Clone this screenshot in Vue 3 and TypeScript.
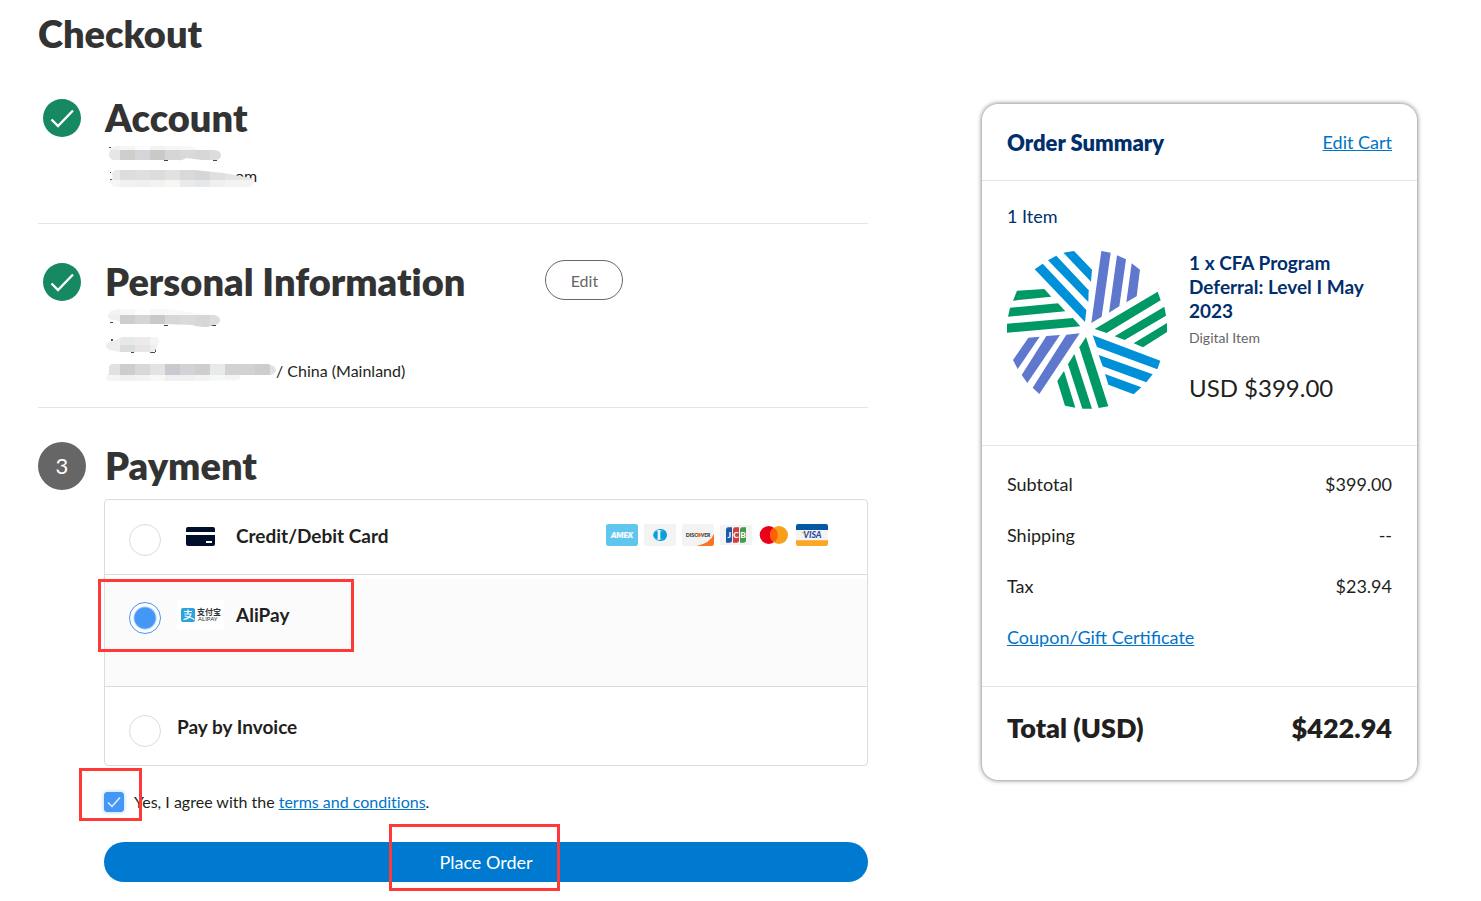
<script setup lang="ts">
import { ref } from 'vue'

interface MosaicRow {
  x: number
  y: number
  h: number
  colors: string[]
}

const CELL = 15

const accountRows: MosaicRow[] = [
  { x: 1, y: 2, h: 4, colors: ['#f1f1f1', '#f5f5f5', '#fcfcfc', '#f3f3f3', '#f5f6f6', '#f6f8f7', '#fafafa', '#fafafa'] },
  { x: 1, y: 6, h: 11, colors: ['#e6e6e6', '#d0cecd', '#d3d5d8', '#cbc9c8', '#d5d6d7', '#d9d9d7', '#d6d8d8', '#dcdcdc'] },
  { x: 1, y: 26, h: 10, colors: ['#eaeaea', '#dedddc', '#e0dfde', '#dddcdb', '#e2e1df', '#d8d9db', '#d4d6d8', '#dfdfdf', '#e4e4e2', '#e6e6e2'] },
  { x: 1, y: 36, h: 7, colors: ['#f6f6f6', '#f1f1f1', '#efefef', '#f2f2f2', '#f6f6f4', '#e9eaeb', '#e6e7e8', '#efefef', '#f3f3f3', '#f3f3f3'] },
]

const personalRows: MosaicRow[] = [
  { x: 1, y: 1, h: 6, colors: ['#f3f3f3', '#f8f8f8', '#fdfdfc', '#f7f7f7', '#f9f9f9', '#f8fafa', '#fafafa', '#fafafa'] },
  { x: 1, y: 7, h: 12, colors: ['#efefef', '#d0cecd', '#d3d5d8', '#cbc9c8', '#d7d7d7', '#dadad8', '#d6d8d8', '#dddddb'] },
  { x: 1, y: 29, h: 8, colors: ['#eeeeee', '#e6e8e8', '#eceaea', '#f3f4f4'] },
  { x: 1, y: 37, h: 9, colors: ['#ededed', '#dadcde', '#e8e6e5', '#eeeeee'] },
]

const addressRows: MosaicRow[] = [
  { x: 1, y: 6, h: 11, colors: ['#e2e1e0', '#cccdd0', '#d9d8d7', '#e4e3e1', '#c9cad0', '#d2d3d5', '#d0cecd', '#e8eaea', '#d2d2d2', '#d2d2d1', '#cfcdcc', '#e0e1e3'] },
  { x: 1, y: 17, h: 7, colors: ['#f5f5f5', '#f1f1f1', '#f3f3f3', '#f8f8f8', '#f0f0f0', '#f0f0f0', '#f3f3f3', '#f7f8f8', '#f4f4f4', '#ffffff', '#ffffff', '#ffffff'] },
]

const summaryLines = [
  { label: 'Subtotal', value: '$399.00' },
  { label: 'Shipping', value: '--' },
  { label: 'Tax', value: '$23.94' },
]

const method = ref('alipay')
const agreed = ref(true)
</script>

<template>
  <div class="page">
    <h1 class="title">Checkout</h1>

    <div class="columns">
      <main class="steps">
        <section class="step step-first">
          <div class="marker">
            <svg width="38" height="38" viewBox="0 0 38 38" aria-hidden="true">
              <circle cx="19" cy="19" r="19" fill="#168962" />
              <path d="M8.5 20.5 L15 27 L30 11.5" fill="none" stroke="#fff" stroke-width="2.4" />
            </svg>
          </div>
          <div class="content">
            <h2>Account</h2>
            <svg class="mosaic" width="160" height="48" viewBox="0 0 160 48" aria-hidden="true">
              <defs>
                <clipPath id="account-clip">
                  <path d="M11 2 H84 Q92 3 95 6 H111 Q117 7 117 11 Q117 16 111 16 H98 L82 14 Q78 17 74 16 H11 Q5 16 5 10.5 Q6 3 11 2 Z" />
                  <path d="M13 26 H90 L120 29 L141 33 Q151 34 150 39 Q148 43 143 43 H12 Q6 42 6 37 Q10 35 8 30 Q9 26 13 26 Z" />
                </clipPath>
              </defs>
              <path d="M5 3h2v1h-2z M6 28h1v1h-1z M6 35h2v1h-2z M60 16h4v1h-4z M87 12h2v1h-2z M109 16h4v1h-4z" fill="#444" />
              <text x="131" y="38" font-size="16" fill="#222">om</text>
              <g clip-path="url(#account-clip)">
                <template v-for="row in accountRows" :key="row.y">
                  <rect v-for="(c, i) in row.colors" :key="i" :x="row.x + i * CELL" :y="row.y" :width="CELL" :height="row.h" :fill="c" />
                </template>
              </g>
            </svg>
          </div>
        </section>

        <section class="step">
          <div class="marker">
            <svg width="38" height="38" viewBox="0 0 38 38" aria-hidden="true">
              <circle cx="19" cy="19" r="19" fill="#168962" />
              <path d="M8.5 20.5 L15 27 L30 11.5" fill="none" stroke="#fff" stroke-width="2.4" />
            </svg>
          </div>
          <div class="content">
            <div class="heading-row">
              <h2>Personal Information</h2>
              <button type="button" class="edit">Edit</button>
            </div>
            <svg class="mosaic" width="160" height="50" viewBox="0 0 160 50" aria-hidden="true">
              <defs>
                <clipPath id="personal-clip">
                  <path d="M10 2 Q14 1 20 1 H66 L92 5 L110 7 Q116 8 116 12 Q116 17 109 17 L104 19 Q94 19 88 17 L60 16 H16 Q16 12 10 12 Q4 12 4 7 Q5 3 10 2 Z" />
                  <path d="M18 29 H52 Q56 30 55 34 Q53 38 52 41 Q50 45 44 44 H16 L6 42 Q2 41 2 37 Q3 33 12 32 Z" />
                </clipPath>
              </defs>
              <path d="M6 14h3v1h-3z M60 17h4v1h-4z M107 8h3v2h-3z M107 17h5v1h-5z M7 31h2v2h-2z M27 44h3v1h-3z M46 44h5v1h-5z M51 41h1v3h-1z" fill="#444" />
              <g clip-path="url(#personal-clip)">
                <template v-for="row in personalRows" :key="row.y">
                  <rect v-for="(c, i) in row.colors" :key="i" :x="row.x + i * CELL" :y="row.y" :width="CELL" :height="row.h" :fill="c" />
                </template>
              </g>
            </svg>
            <p class="address">
              <svg class="mosaic" width="172" height="25" viewBox="0 0 172 25" aria-hidden="true">
                <defs>
                  <clipPath id="address-clip">
                    <path d="M9 6 H164 Q172 8 172 12 Q171 17 165 17 H140 Q138 21 132 22 L100 23 H9 Q2 24 2 20 Q2 17 5 16 V9 Q6 6 9 6 Z" />
                  </clipPath>
                </defs>
                <path d="M165 7h2v2h-2z" fill="#444" />
                <g clip-path="url(#address-clip)">
                  <template v-for="row in addressRows" :key="row.y">
                    <rect v-for="(c, i) in row.colors" :key="i" :x="row.x + i * CELL" :y="row.y" :width="CELL" :height="row.h" :fill="c" />
                  </template>
                </g>
              </svg>
              <span>/ China (Mainland)</span>
            </p>
          </div>
        </section>

        <section class="step">
          <div class="marker"><span class="number">3</span></div>
          <div class="content">
            <h2>Payment</h2>
            <div class="methods" role="radiogroup" aria-label="Payment method">
              <div class="method">
                <input id="pay-card" v-model="method" class="radio" type="radio" name="method" value="card" />
                <span class="icon">
                  <svg width="29" height="19" viewBox="0 0 29 19" aria-hidden="true">
                    <rect width="29" height="19" rx="2" fill="#000f2b" />
                    <rect y="5" width="29" height="3" fill="#fff" />
                    <rect x="20" y="14" width="6" height="2" fill="#fff" />
                  </svg>
                </span>
                <label for="pay-card">Credit/Debit Card</label>
                <span class="brands">
                  <svg viewBox="0 0 96 66" aria-label="American Express">
                    <rect width="96" height="66" rx="7" fill="#60c6ee" />
                    <path d="M12 42 L22 25 H84 L77 33 L84 42 Z" fill="#8fd7f3" />
                    <text x="48" y="42" text-anchor="middle" font-size="24" font-weight="900" font-style="italic" fill="#fff">AMEX</text>
                  </svg>
                  <svg viewBox="0 0 96 66" aria-label="Diners Club">
                    <rect width="96" height="66" rx="7" fill="#f3f3f3" />
                    <path d="M45 15 H51 A18 18 0 0 1 51 51 H45 Z" fill="#069fdc" />
                    <circle cx="45" cy="33" r="17" fill="#069fdc" />
                    <circle cx="45" cy="33" r="15" fill="#f3f3f3" />
                    <path d="M41 21 A12 12 0 0 0 41 45 Z M49 21 A12 12 0 0 1 49 45 Z" fill="#069fdc" />
                  </svg>
                  <svg viewBox="0 0 96 66" aria-label="Discover">
                    <rect width="96" height="66" rx="7" fill="#f3f3f3" />
                    <path d="M96 30 Q84 58 43 66 H89 Q96 66 96 59 Z" fill="#fb7229" />
                    <text x="11" y="39" font-size="16" font-weight="800" fill="#444">DISC</text>
                    <circle cx="51" cy="33" r="6" fill="#fb7229" />
                    <text x="56" y="39" font-size="15" font-weight="800" fill="#444">VER</text>
                  </svg>
                  <svg viewBox="0 0 96 66" aria-label="JCB">
                    <rect y="3" width="96" height="60" rx="6" fill="#f3f3f3" />
                    <path d="M25 10 H36 V50 Q36 56 29 56 H18 V17 Q18 10 25 10 Z" fill="#1d5aa9" />
                    <path d="M46 10 H57 V50 Q57 56 50 56 H39 V17 Q39 10 46 10 Z" fill="#d43f3e" />
                    <path d="M67 10 H78 V50 Q78 56 71 56 H60 V17 Q60 10 67 10 Z" fill="#429b4e" />
                    <g text-anchor="middle" font-size="25" font-weight="900" fill="#fff">
                      <text x="28" y="42">J</text>
                      <text x="48" y="42">C</text>
                      <text x="69" y="42">B</text>
                    </g>
                  </svg>
                  <svg viewBox="0 0 96 66" aria-label="Mastercard">
                    <circle cx="32" cy="33" r="27" fill="#eb001b" />
                    <circle cx="63" cy="33" r="27" fill="#f79e1b" />
                    <path d="M47.5 11 A27 27 0 0 1 47.5 55 A27 27 0 0 1 47.5 11 Z" fill="#ff5f00" />
                  </svg>
                  <svg viewBox="0 0 96 66" aria-label="Visa">
                    <rect width="96" height="66" rx="6" fill="#f3f3f3" />
                    <path d="M6 0 H90 Q96 0 96 6 V18 H0 V6 Q0 0 6 0 Z" fill="#0459a4" />
                    <path d="M0 49 H96 V60 Q96 66 90 66 H6 Q0 66 0 60 Z" fill="#fca626" />
                    <text x="49" y="42" text-anchor="middle" font-size="26" font-weight="900" font-style="italic" fill="#2a4a9a">VISA</text>
                    <path d="M16 24 H24 L27 32 Z" fill="#fca626" />
                  </svg>
                </span>
              </div>

              <div class="method method-open">
                <input id="pay-ali" v-model="method" class="radio" type="radio" name="method" value="alipay" />
                <span class="icon">
                  <svg width="47" height="30" viewBox="0 0 47 30" aria-hidden="true">
                    <rect width="47" height="30" fill="#fff" />
                    <rect x="4" y="8" width="14" height="14" rx="2" fill="#2ba3dc" />
                    <path d="M7 11.5 H15 M11 9.5 V14 M7.5 14 H14 Q13 18.5 6.5 19.5 M7.5 16 Q11 16 17.5 19.5" fill="none" stroke="#fff" stroke-width="1.2" />
                    <text x="20" y="15" font-size="8" font-weight="700" fill="#333" class="cjk">支付宝</text>
                    <text x="21" y="21" font-size="6" font-weight="400" fill="#333">ALIPAY</text>
                  </svg>
                </span>
                <label for="pay-ali">AliPay</label>
                <span class="callout callout-method" aria-hidden="true"></span>
              </div>

              <div class="method method-last">
                <input id="pay-invoice" v-model="method" class="radio" type="radio" name="method" value="invoice" />
                <label for="pay-invoice">Pay by Invoice</label>
              </div>
            </div>

            <div class="agree">
              <span class="check">
                <input id="agree" v-model="agreed" type="checkbox" />
                <svg v-if="agreed" width="20" height="20" viewBox="0 0 20 20" aria-hidden="true">
                  <path d="M4 10.5 L8 14.5 L16 5.5" fill="none" stroke="#e4f1ff" stroke-width="1.5" />
                </svg>
                <span class="callout callout-check" aria-hidden="true"></span>
              </span>
              <span><label for="agree">Yes, I agree with the </label><a href="#terms">terms and conditions</a>.</span>
            </div>

            <button type="button" class="place">
              <span class="place-text">Place Order<span class="callout callout-place" aria-hidden="true"></span></span>
            </button>
          </div>
        </section>
      </main>

      <aside class="summary">
        <header class="summary-head">
          <h3>Order Summary</h3>
          <a href="#cart">Edit Cart</a>
        </header>

        <div class="items">
          <p class="count">1 Item</p>
          <div class="item">
            <svg class="logo" viewBox="36 30 480 480" aria-hidden="true">
              <g fill="#0090da">
                <path d="M119 88 L143 71 L274 210 L270 246 Z" />
                <path d="M159 61 L184 47 L281 151 L280 186 Z" />
                <path d="M205 38 L237 33 L291 89 L288 125 Z" />
                <path d="M293 286 L496 362 L487 388 L306 321 Z" />
                <path d="M311 345 L473 403 L454 427 L323 379 Z" />
                <path d="M330 402 L439 442 L416 463 L340 434 Z" />
              </g>
              <g fill="#009966">
                <path d="M66 152 L148 147 L169 170 L54 182 Z" />
                <path d="M45 203 L189 190 L211 214 L39 230 Z" />
                <path d="M36 251 L234 234 L256 259 L36 278 Z" />
                <path d="M299 267 L488 155 L497 181 L335 279 Z" />
                <path d="M359 289 L508 200 L513 227 L389 300 Z" />
                <path d="M416 310 L516 249 L516 276 L444 322 Z" />
                <path d="M253 322 L273 291 L340 499 L311 504 Z" />
                <path d="M219 373 L238 342 L291 506 L262 506 Z" />
                <path d="M187 423 L207 393 L241 503 L210 497 Z" />
              </g>
              <g fill="#5f78ce">
                <path d="M319 33 L347 38 L320 230 L289 249 Z" />
                <path d="M366 46 L393 58 L373 199 L342 218 Z" />
                <path d="M410 70 L435 89 L425 169 L394 187 Z" />
                <path d="M100 293 L134 290 L68 387 L54 360 Z" />
                <path d="M154 288 L195 285 L97 429 L80 405 Z" />
                <path d="M214 284 L254 280 L133 462 L113 443 Z" />
              </g>
            </svg>
            <div>
              <h4>1 x CFA Program Deferral: Level I May 2023</h4>
              <p class="kind">Digital Item</p>
              <p class="price">USD $399.00</p>
            </div>
          </div>
        </div>

        <div class="lines">
          <div v-for="line in summaryLines" :key="line.label" class="line">
            <span>{{ line.label }}</span><span>{{ line.value }}</span>
          </div>
          <div class="line"><a href="#coupon">Coupon/Gift Certificate</a></div>
        </div>

        <div class="total"><span>Total (USD)</span><span>$422.94</span></div>
      </aside>
    </div>
  </div>
</template>

<style>
body {
  margin: 0;
  background: #fff;
}
</style>

<style scoped>
.page {
  box-sizing: border-box;
  padding: 10px 64px 19px 38px;
  font-family: Lato, "Noto Sans CJK SC", sans-serif;
  font-size: 16px;
  line-height: 25px;
  color: #231f20;
}
h1, h2, h3, h4, p {
  margin: 0;
}
h1, h2 {
  font-size: 38px;
  line-height: 46px;
  font-weight: 800;
  font-variant-ligatures: none;
  color: #333;
}
h2 {
  margin-bottom: 4px;
  padding-left: 1px;
}
a {
  color: #0074c8;
}
.columns {
  display: grid;
  grid-template-columns: 830fr 435fr;
  column-gap: 114px;
  align-items: start;
  margin-top: 38px;
}
.step {
  display: grid;
  grid-template-columns: 48px minmax(0, 1fr);
  column-gap: 18px;
  padding: 34px 0 24px;
  border-top: 1px solid #e6e6e6;
}
.step-first {
  padding: 0 0 31px;
  border-top: 0;
}
.step:last-child {
  padding-bottom: 0;
}
.marker {
  display: flex;
  align-items: center;
  justify-content: center;
  height: 48px;
}
.number {
  width: 48px;
  height: 48px;
  border-radius: 50%;
  background: #666;
  color: #fff;
  font-size: 22px;
  line-height: 48px;
  text-align: center;
}
.mosaic {
  display: block;
  flex: none;
}
.heading-row {
  display: flex;
  align-items: flex-start;
  gap: 80px;
}
.edit {
  width: 78px;
  height: 40px;
  margin-top: 2px;
  padding: 0;
  border: 1px solid #666;
  border-radius: 20px;
  background: #fff;
  color: #666;
  font: inherit;
}
.address {
  display: flex;
}
.methods {
  margin-top: 11px;
  border: 1px solid #dcdcdc;
  border-radius: 4px;
}
.method {
  position: relative;
  display: flex;
  align-items: flex-start;
  box-sizing: border-box;
  min-height: 74px;
  padding: 24px 39px 0 24px;
}
.method-open {
  min-height: 112px;
  padding-top: 27px;
  border-top: 1px solid #dcdcdc;
  background: #fbfbfb;
  box-shadow: inset 0 4px #fff;
}
.method-last {
  min-height: 79px;
  padding-top: 28px;
  border-top: 1px solid #dcdcdc;
}
.method label {
  font-size: 19px;
  line-height: 24px;
  font-weight: 700;
}
.radio {
  appearance: none;
  box-sizing: border-box;
  flex: none;
  width: 32px;
  height: 32px;
  margin: 0 16px 0 0;
  border: 1px solid #dcdcdc;
  border-radius: 50%;
  background: #fff;
}
.radio:checked {
  border-color: #4497f7;
  background: radial-gradient(circle, #4497f7 10px, #fff 12px);
}
.icon {
  display: flex;
  flex: none;
  align-items: center;
  justify-content: center;
  width: 47px;
  height: 24px;
  margin-right: 12px;
}
.icon svg {
  flex: none;
}
.method-open .icon, .method-open label {
  height: 26px;
  line-height: 26px;
}
.cjk {
  font-family: "Noto Sans CJK SC", sans-serif;
}
.brands {
  display: flex;
  gap: 6px;
  margin-left: auto;
}
.brands svg {
  width: 32px;
  height: 22px;
}
.agree {
  display: flex;
  align-items: center;
  gap: 10px;
  margin-top: 24px;
  line-height: 24px;
  font-variant-ligatures: none;
}
.check {
  position: relative;
  display: grid;
  width: 20px;
  height: 20px;
}
.check input {
  appearance: none;
  grid-area: 1 / 1;
  box-sizing: border-box;
  width: 20px;
  height: 20px;
  margin: 0;
  border: 1px solid #4497f7;
  border-radius: 3px;
  background: #fff;
  box-shadow: 0 0 4px #a9d0fb;
}
.check input:checked {
  background: #4497f7;
}
.check svg {
  grid-area: 1 / 1;
  pointer-events: none;
  z-index: 1;
}
.place {
  display: block;
  width: 100%;
  height: 40px;
  margin-top: 28px;
  padding: 0;
  border: 0;
  border-radius: 20px;
  background: #007ad0;
  color: #fff;
  font: inherit;
  font-size: 18px;
}
.place-text {
  position: relative;
}
.callout {
  position: absolute;
  box-sizing: border-box;
  border: 3px solid #ff3838;
  pointer-events: none;
}
.callout-method {
  left: -7px;
  top: 4px;
  width: 256px;
  height: 73px;
}
.callout-check {
  left: -25px;
  top: -24px;
  width: 63px;
  height: 53px;
}
.callout-place {
  left: -50px;
  top: -27px;
  width: 171px;
  height: 67px;
}
.summary {
  margin-top: 10px;
  border-radius: 16px;
  background: #fff;
  box-shadow: 0 0 5px rgba(0, 0, 0, 0.6);
  font-size: 18px;
}
.summary-head {
  display: flex;
  align-items: center;
  justify-content: space-between;
  height: 76px;
  padding: 0 25px;
  border-bottom: 1px solid #e6e6e6;
}
.summary-head h3 {
  font-size: 22px;
  font-weight: 800;
  color: #002f6c;
}
.items {
  padding: 23px 25px 35px;
  border-bottom: 1px solid #e6e6e6;
}
.count {
  color: #002f6c;
}
.item {
  display: flex;
  align-items: flex-start;
  gap: 22px;
  margin-top: 21px;
}
.logo {
  flex: none;
  width: 160px;
  height: 160px;
}
.item h4 {
  padding-top: 1px;
  font-size: 19px;
  line-height: 24px;
  font-weight: 700;
  color: #002f6c;
}
.kind {
  margin-top: 2px;
  font-size: 14px;
  color: #666;
}
.price {
  margin-top: 25px;
  font-size: 24px;
}
.lines {
  display: grid;
  row-gap: 26px;
  padding: 26px 25px 36px;
  border-bottom: 1px solid #e6e6e6;
}
.line, .total {
  display: flex;
  justify-content: space-between;
}
.total {
  padding: 23px 25px 34px;
  font-size: 27px;
  line-height: 36px;
  font-weight: 800;
}
</style>
